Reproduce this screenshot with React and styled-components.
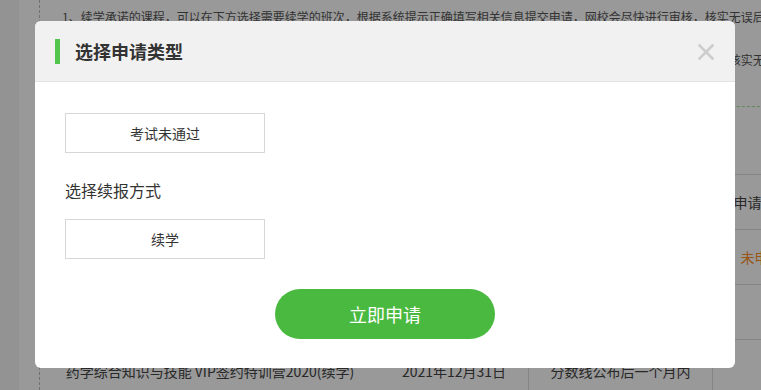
import React from "react";
import styled, { createGlobalStyle } from "styled-components";

const GlobalStyle = createGlobalStyle`
  html, body { margin: 0; padding: 0; }
  body {
    width: 761px;
    height: 390px;
    overflow: hidden;
    font-family: "Noto Sans CJK SC", "Noto Sans", sans-serif;
    background: #ffffff;
  }
`;

const Page = styled.div`
  display: flex;
  width: 761px;
  height: 390px;
  overflow: hidden;
  background: #ffffff;
`;

const SideStrip = styled.div`
  flex: 0 0 19px;
  background: #f6f6f6;
`;

const Gutter = styled.div`
  flex: 0 0 20px;
  background: #ffffff;
  border-right: 1px dashed #bdbdbd;
`;

const Content = styled.div`
  flex: 0 0 auto;
  display: flex;
  flex-direction: column;
  width: 800px;
`;

const Note = styled.p`
  margin: ${(p) => p.$top}px 0 0;
  padding-left: 22px;
  font-size: 12px;
  line-height: 20px;
  color: #555;
  white-space: nowrap;
`;

const Divider = styled.div`
  margin-top: 36px;
  height: 0;
  border-bottom: 1px dashed #9ee59e;
`;

const Table = styled.div`
  margin-top: 67px;
  display: grid;
  grid-template-columns: 340px 148px 184px 98px;
  grid-auto-rows: 55px;
`;

const Cell = styled.div`
  display: flex;
  align-items: center;
  justify-content: center;
  padding-top: ${(p) => (p.$low ? 8 : 0)}px;
  box-sizing: border-box;
  border-top: 1px solid #dcdcdc;
  border-left: ${(p) => (p.$divided ? "1px solid #dcdcdc" : "none")};
  font-size: 14px;
  color: ${(p) => (p.$warn ? "#ff8f1f" : "#444")};
  white-space: nowrap;
`;

const Overlay = styled.div`
  position: fixed;
  inset: 0;
  background: rgba(0, 0, 0, 0.4);
`;

const Modal = styled.div`
  position: fixed;
  left: 35px;
  top: 21px;
  width: 700px;
  background: #ffffff;
  border-radius: 6px;
  overflow: hidden;
`;

const Header = styled.div`
  display: flex;
  align-items: center;
  height: 60px;
  padding: 0 21px 0 20px;
  background: #f1f1f1;
  border-bottom: 1px solid #e3e3e3;
`;

const Bar = styled.span`
  width: 5px;
  height: 25px;
  background: #52c54e;
`;

const Title = styled.h2`
  margin: 0 0 0 15px;
  font-size: 18px;
  font-weight: 700;
  color: #333;
  line-height: 24px;
`;

const CloseButton = styled.button`
  margin-left: auto;
  margin-top: 1px;
  padding: 0;
  border: none;
  background: transparent;
  display: flex;
  cursor: pointer;
`;

const Body = styled.div`
  display: flex;
  flex-direction: column;
  align-items: flex-start;
  padding: 31px 30px 29px;
`;

const OptionBox = styled.div`
  width: 200px;
  height: 40px;
  box-sizing: border-box;
  border: 1px solid #d6d6d6;
  display: flex;
  align-items: center;
  justify-content: center;
  font-size: 14px;
  color: #333;
`;

const Label = styled.div`
  margin: 27px 0 19px;
  font-size: 16px;
  line-height: 20px;
  color: #333;
`;

const SubmitButton = styled.button`
  align-self: center;
  margin-top: 30px;
  width: 220px;
  height: 50px;
  border: none;
  border-radius: 25px;
  background: #4ab93f;
  color: #ffffff;
  font-family: inherit;
  font-size: 18px;
  cursor: pointer;
`;

const rows = [
  ["课程名称", "续学截止时间", "续学规定", "申请状态"],
  ["执业药师全科 VIP签约特训营2020(续学)", "2021年12月31日", "分数线公布后一个月内", "未申请"],
  ["药学专业知识 VIP签约特训营2020(续学)", "2021年12月31日", "分数线公布后一个月内", ""],
  ["药学综合知识与技能 VIP签约特训营2020(续学)", "2021年12月31日", "分数线公布后一个月内", ""],
];

export default function App() {
  return (
    <>
      <GlobalStyle />
      <Page>
        <SideStrip />
        <Gutter />
        <Content>
          <Note $top={7}>
            1、续学承诺的课程，可以在下方选择需要续学的班次，根据系统提示正确填写相关信息提交申请，网校会尽快进行审核，核实无误后为您开通课程。
          </Note>
          <Note $top={23}>
            2、如因个人原因未能参加考试或考试未通过，可在规定时间内申请续学，提交后请耐心等待审核结果，审核通过后系统会通知核实无误后再进行学习。
          </Note>
          <Divider />
          <Table>
            {rows.map((row, r) =>
              row.map((text, c) => (
                <Cell
                  key={`${r}-${c}`}
                  $divided={c >= 2}
                  $warn={text === "未申请"}
                  $low={r === rows.length - 1}
                >
                  {text}
                </Cell>
              ))
            )}
          </Table>
        </Content>
      </Page>
      <Overlay />
      <Modal>
        <Header>
          <Bar />
          <Title>选择申请类型</Title>
          <CloseButton aria-label="关闭">
            <svg width="16" height="16" viewBox="0 0 16 16">
              <path d="M1.5 1.5 L14.5 14.5 M14.5 1.5 L1.5 14.5" stroke="#cdcdcd" strokeWidth="2.6" strokeLinecap="square" />
            </svg>
          </CloseButton>
        </Header>
        <Body>
          <OptionBox>考试未通过</OptionBox>
          <Label>选择续报方式</Label>
          <OptionBox>续学</OptionBox>
          <SubmitButton>立即申请</SubmitButton>
        </Body>
      </Modal>
    </>
  );
}
